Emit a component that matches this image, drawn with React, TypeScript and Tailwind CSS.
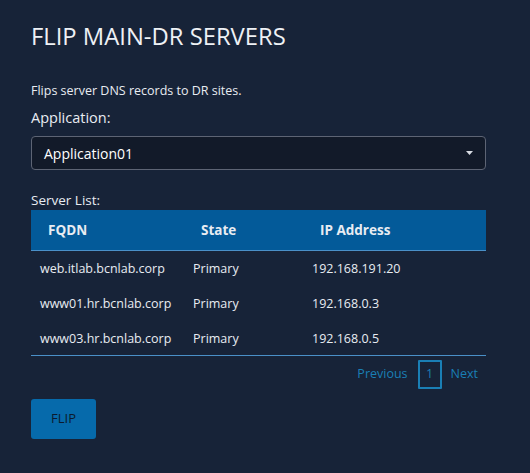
const rows = [
  { fqdn: "web.itlab.bcnlab.corp", state: "Primary", ip: "192.168.191.20" },
  { fqdn: "www01.hr.bcnlab.corp", state: "Primary", ip: "192.168.0.3" },
  { fqdn: "www03.hr.bcnlab.corp", state: "Primary", ip: "192.168.0.5" },
]

export default function App() {
  return (
    <div className="min-h-[473px] w-full bg-[#172338] text-[#e8ecf2]" style={{ fontFamily: "'Open Sans', 'Noto Sans', sans-serif" }}>
      <div className="w-[455px] ml-[31px] pt-[21px]">
        {/* ── TITLE ── */}
        <h1 className="text-[23.8px] leading-[30px] font-normal text-[#eef1f5]">FLIP MAIN-DR SERVERS</h1>

        <p className="mt-[31px] text-[12.5px] leading-[18px]">Flips server DNS records to DR sites.</p>

        <label className="block mt-[8px] text-[14.5px] leading-[20px]">Application:</label>

        {/* ── SELECT ── */}
        <div className="mt-[8px] h-[34px] flex items-center justify-between rounded-[4px] border border-[#5d6474] bg-[#121a29] pl-[12px] pr-[12px]">
          <span className="text-[14px] text-white">Application01</span>
          <svg width="7" height="4" viewBox="0 0 7 4" className="text-[#d8dce3]">
            <path d="M0 0h7L3.5 4z" fill="currentColor" />
          </svg>
        </div>

        <div className="mt-[20px] text-[13.5px] leading-[20px]">Server List:</div>

        {/* ── TABLE ── */}
        <table className="w-full border-collapse">
          <thead>
            <tr className="bg-[#035a99] h-[40px] border-b border-[#4a90c8]">
              <th className="text-left font-bold text-[13.5px] pl-[17px] w-[162px]">FQDN</th>
              <th className="text-left font-bold text-[13.5px] pl-[8px] w-[119px]">State</th>
              <th className="text-left font-bold text-[13.5px] pl-[8px]">IP Address</th>
            </tr>
          </thead>
          <tbody className="text-[12.5px]">
            {rows.map((r) => (
              <tr key={r.fqdn} className="h-[35px]">
                <td className="pl-[9px] pt-[3px]">{r.fqdn}</td>
                <td className="pt-[3px]">{r.state}</td>
                <td className="pt-[3px]">{r.ip}</td>
              </tr>
            ))}
          </tbody>
        </table>
        <div className="border-t border-[#4a90c8]" />

        {/* ── PAGINATION ── */}
        <div className="flex justify-end items-center mt-[4px] pr-[8px] text-[12.5px] text-[#1a7fb5]">
          <span className="mr-[10px]">Previous</span>
          <span className="w-[24px] h-[29px] flex items-center justify-center border-2 border-[#1a7fb5] rounded-[1px]">1</span>
          <span className="ml-[9px]">Next</span>
        </div>

        {/* ── FLIP BUTTON ── */}
        <button className="mt-[10px] w-[65px] h-[40px] rounded-[3px] bg-[#066aab] text-[13px] text-[#0c1a2e]">FLIP</button>
      </div>
    </div>
  )
}
